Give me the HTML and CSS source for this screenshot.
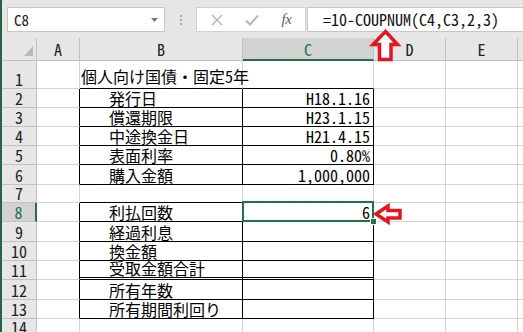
FILE: index.html
```html
<!DOCTYPE html>
<html lang="ja">
<head>
<meta charset="utf-8">
<title>Excel COUPNUM</title>
<link rel="stylesheet" href="styles.css">
</head>
<body>
<div class="app">
  <div class="fbar">
    <div class="namebox"><span class="nb-text">C8</span>
      <svg class="dd" width="7" height="4" viewBox="0 0 7 4"><path d="M0 0h7L3.5 4z" fill="#777"/></svg>
    </div>
    <div class="sep"><i></i><i></i><i></i></div>
    <div class="btns">
      <span class="bslot"><svg width="12" height="12" viewBox="0 0 12 12"><path d="M1 1L11 11M11 1L1 11" stroke="#b5b5b5" stroke-width="1.4"/></svg></span>
      <span class="bslot"><svg width="14" height="12" viewBox="0 0 14 12"><path d="M1 6.5L5 10.5L13 1.5" fill="none" stroke="#b5b5b5" stroke-width="2"/></svg></span>
      <span class="bslot fx">fx</span>
    </div>
    <div class="formula">=10-COUPNUM(C4,C3,2,3)</div>
  </div>
  <div class="sheet">
    <div class="corner"><svg width="9" height="10" viewBox="0 0 9 10"><path d="M9 0V10H0z" fill="#b9b9b9"/></svg></div>
    <div class="ch">A</div>
    <div class="ch">B</div>
    <div class="ch sel">C</div>
    <div class="ch">D</div>
    <div class="ch">E</div>
    <div class="ch last"></div>

    <div class="rh">1</div>
    <div class="c"></div>
    <div class="c bb title">個人向け国債・固定5年</div>
    <div class="c bb"></div>
    <div class="c"></div><div class="c"></div><div class="c last"></div>

    <div class="rh">2</div>
    <div class="c rb"></div>
    <div class="c rb bb lbl">発行日</div>
    <div class="c rb bb val">H18.1.16</div>
    <div class="c"></div><div class="c"></div><div class="c last"></div>

    <div class="rh">3</div>
    <div class="c rb"></div>
    <div class="c rb bb lbl">償還期限</div>
    <div class="c rb bb val">H23.1.15</div>
    <div class="c"></div><div class="c"></div><div class="c last"></div>

    <div class="rh">4</div>
    <div class="c rb"></div>
    <div class="c rb bb lbl">中途換金日</div>
    <div class="c rb bb val">H21.4.15</div>
    <div class="c"></div><div class="c"></div><div class="c last"></div>

    <div class="rh">5</div>
    <div class="c rb"></div>
    <div class="c rb bb lbl">表面利率</div>
    <div class="c rb bb val">0.80%</div>
    <div class="c"></div><div class="c"></div><div class="c last"></div>

    <div class="rh">6</div>
    <div class="c rb"></div>
    <div class="c rb bb lbl">購入金額</div>
    <div class="c rb bb val">1,000,000</div>
    <div class="c"></div><div class="c"></div><div class="c last"></div>

    <div class="rh">7</div>
    <div class="c"></div>
    <div class="c bb"></div>
    <div class="c bb"></div>
    <div class="c"></div><div class="c"></div><div class="c last"></div>

    <div class="rh rsel">8</div>
    <div class="c rb"></div>
    <div class="c rb bb lbl">利払回数</div>
    <div class="c rb bb val active">6<span class="handle"></span></div>
    <div class="c"></div><div class="c"></div><div class="c last"></div>

    <div class="rh">9</div>
    <div class="c rb"></div>
    <div class="c rb bb lbl">経過利息</div>
    <div class="c rb bb val"></div>
    <div class="c"></div><div class="c"></div><div class="c last"></div>

    <div class="rh">10</div>
    <div class="c rb"></div>
    <div class="c rb bb lbl">換金額</div>
    <div class="c rb bb val"></div>
    <div class="c"></div><div class="c"></div><div class="c last"></div>

    <div class="rh">11</div>
    <div class="c rb"></div>
    <div class="c rb bd lbl">受取金額合計</div>
    <div class="c rb bd val"></div>
    <div class="c"></div><div class="c"></div><div class="c last"></div>

    <div class="rh">12</div>
    <div class="c rb"></div>
    <div class="c rb bb lbl">所有年数</div>
    <div class="c rb bb val"></div>
    <div class="c"></div><div class="c"></div><div class="c last"></div>

    <div class="rh">13</div>
    <div class="c rb"></div>
    <div class="c rb bb lbl">所有期間利回り</div>
    <div class="c rb bb val"></div>
    <div class="c"></div><div class="c"></div><div class="c last"></div>

    <div class="rh">14</div>
    <div class="c"></div><div class="c"></div><div class="c"></div>
    <div class="c"></div><div class="c"></div><div class="c last"></div>
  </div>
  <svg class="marks" width="523" height="332" viewBox="0 0 523 332">
    <path d="M385.5 31.5L397.5 44.5H391V59.5H379.5V44.5H373z" fill="#fff" stroke="#e5141f" stroke-width="3.5" stroke-linejoin="miter"/>
    <path d="M376 214L388 206V210.5H400V218H388V222z" fill="#fff" stroke="#e5141f" stroke-width="3.5" stroke-linejoin="miter"/>
  </svg>
</div>
</body>
</html>
```
FILE: styles.css
```css
html, body {
  margin: 0;
  padding: 0;
  background: #fff;
  overflow: hidden;
}
.app {
  position: relative;
  width: 523px;
  height: 332px;
  overflow: hidden;
  border-left: 2px solid #2a6046;
  box-sizing: border-box;
  font-family: "Noto Sans Mono CJK JP", "Noto Sans CJK JP", monospace;
  font-size: 16px;
  color: #000;
}
.fbar {
  display: flex;
  align-items: flex-start;
  height: 38px;
  padding-top: 7px;
  box-sizing: border-box;
  background: #e6e6e6;
}
.namebox {
  margin-left: 5px;
  width: 158px;
  height: 25px;
  box-sizing: border-box;
  border: 1px solid #c6c6c6;
  background: #fff;
  display: flex;
  align-items: center;
  justify-content: space-between;
  padding: 0 6px 0 6px;
}
.nb-text {
  font-size: 15px;
  color: #222;
  line-height: 23px;
}
.dd { display: block; }
.sep {
  width: 31px;
  height: 25px;
  display: flex;
  flex-direction: column;
  align-items: center;
  justify-content: center;
  gap: 2px;
}
.sep i {
  display: block;
  width: 2px;
  height: 2px;
  background: #a8a8a8;
}
.btns {
  width: 110px;
  height: 25px;
  box-sizing: border-box;
  border: 1px solid #d0d0d0;
  background: #fff;
  display: flex;
  align-items: center;
  padding-left: 2px;
}
.bslot {
  width: 35px;
  display: flex;
  justify-content: center;
  align-items: center;
}
.bslot svg { display: block; }
.fx {
  font-family: "Liberation Serif", serif;
  font-style: italic;
  font-size: 15px;
  color: #606060;
  letter-spacing: -0.5px;
}
.formula {
  flex: 1;
  margin-left: 1px;
  height: 25px;
  box-sizing: border-box;
  border: 1px solid #c6c6c6;
  border-right: none;
  background: #fff;
  padding-left: 15px;
  line-height: 23px;
  color: #111;
  white-space: nowrap;
}
.sheet {
  display: grid;
  grid-template-columns: 35px 43px 163px 131px 72px 72px 1fr;
  grid-template-rows: 23px 28px 19px 19px 19px 19px 20px 18px 19px 20px 19px 19px 20px 19px 1fr;
}
.sheet > div {
  box-sizing: border-box;
  border-right: 1px solid #d4d4d4;
  border-bottom: 1px solid #d4d4d4;
  white-space: nowrap;
}
.sheet > .last { border-right: none; }
.corner, .ch, .rh {
  background: #e6e6e6;
  border-color: #c2c2c2 !important;
  color: #222;
}
.corner {
  display: flex;
  align-items: flex-end;
  justify-content: flex-end;
  padding: 0 3px 4px 0;
}
.corner svg { display: block; }
.ch {
  text-align: center;
  line-height: 22px;
}
.ch.sel {
  background: #d2d2d2;
  color: #217346;
  border-bottom: 2px solid #217346 !important;
}
.rh {
  display: flex;
  align-items: flex-end;
  justify-content: center;
  line-height: 17px;
}
.rh.rsel {
  background: #d2d2d2;
  color: #217346;
  border-right: 2px solid #217346 !important;
}
.c {
  display: flex;
  align-items: flex-end;
  line-height: 17px;
}
.c.title { padding-left: 1px; padding-bottom: 3px; }
.c.lbl { padding-left: 29px; }
.c.val { justify-content: flex-end; padding-right: 3px; }
.sheet > .rb { border-right-color: #000; }
.sheet > .bb { border-bottom-color: #000; }
.sheet > .bd { border-bottom: 3px double #000; }
.active { position: relative; }
.active::after {
  content: "";
  position: absolute;
  left: -1px;
  top: -2px;
  right: -1px;
  bottom: -1px;
  border: 2px solid #217346;
  pointer-events: none;
}
.handle {
  position: absolute;
  right: -4px;
  bottom: -4px;
  width: 5px;
  height: 5px;
  background: #217346;
  border: 1px solid #fff;
  z-index: 2;
}
.marks {
  position: absolute;
  left: -2px;
  top: 0;
  pointer-events: none;
}
```
